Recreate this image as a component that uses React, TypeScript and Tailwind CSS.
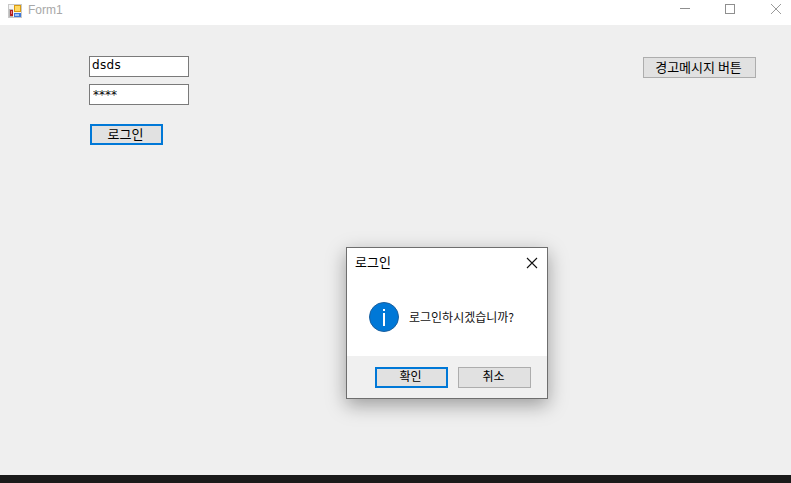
const font = "font-['Noto_Sans_CJK_KR','Noto_Sans',sans-serif]";

export default function App() {
  return (
    <div className={`relative flex h-[483px] w-[791px] flex-col overflow-hidden bg-[#efefef] text-[13px] text-black ${font}`}>
      {/* Title bar */}
      <div className="flex h-[25px] shrink-0 items-center justify-between bg-white">
        <div className="flex items-center">
          <svg width="14" height="14" viewBox="0 0 14 14" className="ml-[8px] mt-[-3px]">
            <rect x="0" y="0" width="14" height="14" fill="#c8c8c8" />
            <rect x="1" y="1" width="12" height="12" fill="#f4f4f4" />
            <rect x="1" y="5" width="4" height="8" fill="#b8b8b8" />
            <rect x="2" y="6" width="3" height="6" fill="#b02020" />
            <rect x="3" y="7" width="1" height="3" fill="#e88080" />
            <rect x="6" y="1" width="7" height="7" fill="#d89a10" />
            <rect x="7" y="2" width="5" height="5" fill="#ffd860" />
            <rect x="6" y="9" width="7" height="4" fill="#3f78d8" />
            <rect x="7" y="10" width="4" height="2" fill="#a0c4f4" />
          </svg>
          <span className="ml-[6px] mt-[-6px] font-['Liberation_Sans',sans-serif] text-[12px] text-[#a8a8a8]">Form1</span>
        </div>
        <div className="mt-[-7px] flex items-center">
          <svg width="12" height="12" viewBox="0 0 12 12" className="mr-[33px]">
            <path d="M1 5.5H11" stroke="#8f8f8f" strokeWidth="1" />
          </svg>
          <svg width="12" height="12" viewBox="0 0 12 12" className="mr-[34px]">
            <rect x="1.5" y="1.5" width="9" height="9" fill="none" stroke="#8f8f8f" strokeWidth="1" />
          </svg>
          <svg width="12" height="12" viewBox="0 0 12 12" className="mr-[9px]">
            <path d="M1 1L11 11M11 1L1 11" stroke="#9a9a9a" strokeWidth="1" />
          </svg>
        </div>
      </div>

      {/* Form body */}
      <div className="flex flex-1 items-start justify-between pl-[89px] pr-[35px] pt-[31px]">
        <div className="flex flex-col">
          <input
            readOnly
            value="dsds"
            className="h-[21px] w-[100px] border border-[#7a7a7a] bg-white pb-[3px] pl-[2px] font-['DejaVu_Sans',sans-serif] text-[12px] tracking-[0.3px] text-black outline-none"
          />
          <input
            readOnly
            value="****"
            className="mt-[7px] h-[21px] w-[100px] border border-[#7a7a7a] bg-white pl-[3px] font-['DejaVu_Sans',sans-serif] text-[12px] text-black outline-none"
          />
          <button className="ml-[1px] mt-[19px] flex h-[21px] w-[73px] items-center justify-center border-2 border-[#0078d7] bg-[#e1e1e1] pb-[2px] pr-[2px] text-[13px]">
            로그인
          </button>
        </div>
        <button className="mt-[1px] flex h-[21px] w-[113px] items-center justify-center border border-[#adadad] bg-[#e1e1e1] pb-[2px] pr-[2px] text-[13px]">
          경고메시지 버튼
        </button>
      </div>

      {/* Taskbar edge */}
      <div className="h-[8px] shrink-0 bg-[#1a1a1a]" />

      {/* Message box */}
      <div className="absolute left-[346px] top-[247px] flex h-[152px] w-[202px] flex-col border border-[#6e6e6e] bg-white shadow-[0_6px_18px_rgba(0,0,0,0.35)]">
        <div className="flex h-[29px] items-center justify-between pl-[8px] pr-[9px]">
          <span className="mt-[-2px] text-[13px]">로그인</span>
          <svg width="12" height="12" viewBox="0 0 12 12">
            <path d="M1 1L11 11M11 1L1 11" stroke="#111111" strokeWidth="1.1" />
          </svg>
        </div>
        <div className="flex flex-1 items-center pl-[22px]">
          <svg width="30" height="30" viewBox="0 0 30 30">
            <circle cx="15" cy="15" r="14.5" fill="#0078d7" stroke="#1a5f9e" strokeWidth="1" />
            <rect x="14" y="7" width="2" height="2" fill="#ffffff" />
            <rect x="14" y="11" width="2" height="13" fill="#ffffff" />
          </svg>
          <span className="ml-[10px] text-[12px] text-[#111111]">로그인하시겠습니까?</span>
        </div>
        <div className="flex h-[42px] items-center justify-end gap-[10px] bg-[#f0f0f0] pr-[16px]">
          <button className="flex h-[21px] w-[73px] items-center justify-center border-2 border-[#0078d7] bg-[#e1e1e1] pb-[2px] pr-[2px] text-[12px]">
            확인
          </button>
          <button className="flex h-[21px] w-[73px] items-center justify-center border border-[#adadad] bg-[#e1e1e1] pb-[2px] pr-[2px] text-[12px]">
            취소
          </button>
        </div>
      </div>
    </div>
  );
}
